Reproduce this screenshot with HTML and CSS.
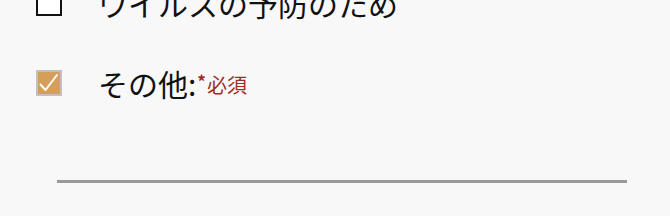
FILE: index.html
```html
<!DOCTYPE html>
<html lang="ja">
<head>
<meta charset="utf-8">
<link rel="stylesheet" href="styles.css">
</head>
<body>
<div class="form">
  <ul class="options">
    <li class="option">
      <span class="box"></span>
      <span class="label">ウイルスの予防のため</span>
    </li>
    <li class="option">
      <span class="box checked">
        <svg viewBox="0 0 22 22" width="22" height="22"><path d="M2.5 12.5 L7.5 18 L19 3" fill="none" stroke="#fff" stroke-width="2" stroke-linecap="round" stroke-linejoin="round"/></svg>
      </span>
      <span class="label">その他:<span class="req"><span class="ast">*</span>必須</span></span>
    </li>
  </ul>
  <div class="input"></div>
</div>
</body>
</html>
```
FILE: styles.css
```css
html, body {
  margin: 0;
  padding: 0;
  background: #f8f8f8;
  font-family: "Noto Sans CJK JP", "Noto Sans", sans-serif;
  color: #111;
}
.form {
  width: 670px;
  height: 216px;
  overflow: hidden;
}
.options {
  list-style: none;
  margin: -37px 0 0 0;
  padding: 0 0 0 36px;
}
.option {
  display: flex;
  align-items: center;
  height: 80px;
}
.box {
  box-sizing: border-box;
  width: 26px;
  height: 26px;
  border: 2px solid #111;
  background: #fff;
  display: flex;
  align-items: center;
  justify-content: center;
  flex: none;
}
.box.checked {
  border: 2px solid #c4c0bb;
  background: #d69e5b;
}
.label {
  margin-left: 36px;
  font-size: 30px;
  line-height: 1;
}
.req {
  font-size: 20px;
  color: #9e2d24;
  margin-left: 1px;
  vertical-align: 3px;
}
.ast {
  font-size: 17px;
  font-weight: bold;
  vertical-align: 5px;
  margin-right: 1px;
}
.input {
  margin: 57px 0 0 57px;
  width: 570px;
  height: 0;
  border-bottom: 3px solid #999;
}
```
